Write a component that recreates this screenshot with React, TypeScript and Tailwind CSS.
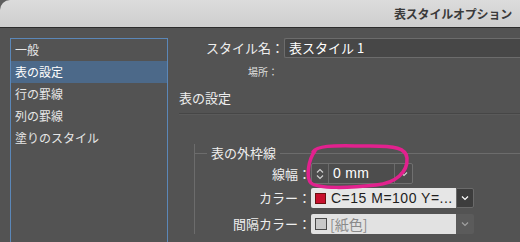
const font = { fontFamily: '"Noto Sans CJK JP", "Noto Sans", sans-serif' }

const items = ["一般", "表の設定", "行の罫線", "列の罫線", "塗りのスタイル"]

function Chevron({ className = "" }: { className?: string }) {
  return (
    <svg width="8" height="6" viewBox="0 0 8 6" className={className}>
      <path d="M1 1.5 L4 4.5 L7 1.5" fill="none" stroke="currentColor" strokeWidth="1.2" />
    </svg>
  )
}

export default function App() {
  return (
    <div
      className="relative w-[520px] h-[242px] overflow-hidden bg-[#5e5e5e] text-[#e6e6e6]"
      style={font}
    >
      {/* title bar */}
      <div className="h-[28px] rounded-tl-[10px] bg-gradient-to-b from-[#dcdcdc] to-[#cecece] border-b border-[#2c2c2c] flex items-center justify-end pr-[8px]">
        <span className="text-[12px] font-bold text-[#3a3a3a] tracking-[-0.2px]">表スタイルオプション</span>
      </div>

      <div className="flex h-[214px] bg-[#535353] pt-[10px]">
        {/* category list */}
        <div className="ml-[10px] w-[158px] h-[220px] border border-[#5b87b8] flex flex-col">
          {items.map((it, i) => (
            <div
              key={it}
              className={`h-[22px] flex items-center pl-[4px] text-[12px] ${i === 1 ? "bg-[#4c6989] text-white" : ""}`}
            >
              {it}
            </div>
          ))}
        </div>

        {/* settings */}
        <div className="ml-[11px] flex-1 flex flex-col">
          <div className="flex h-[20px]">
            <div className="w-[105px] text-right text-[13px] leading-[20px] text-[#eeeeee]">スタイル名：</div>
            <div className="flex-1 border border-[#6c6c6c] border-r-0 bg-[#474747] rounded-l-[2px] pl-[4px] text-[13px] leading-[18px] text-white">
              表スタイル 1
            </div>
          </div>
          <div className="mt-[7px] h-[14px] w-[99px] text-right text-[10px] leading-[14px] text-[#dddddd]">場所：</div>
          <div className="mt-[10px] h-[18px] text-[13px] leading-[18px] text-[#eeeeee]">表の設定</div>
          <div className="mt-[6px] h-px bg-[#464646]" />
          <div className="h-px bg-[#5a5a5a]" />

          {/* group: 表の外枠線 */}
          <div className="mt-[29px] ml-[15px] flex items-center h-[18px]">
            <div className="w-[13px] h-[18px] border-l border-[#6c6c6c] flex items-center">
              <div className="w-full h-px bg-[#6c6c6c]" />
            </div>
            <span className="px-[4px] text-[13px] leading-[18px] text-[#eeeeee]">表の外枠線</span>
            <div className="flex-1 h-px bg-[#6c6c6c]" />
          </div>
          <div className="ml-[15px] -mt-[9px] pt-[10px] border-l border-[#6c6c6c] pl-[12px] flex flex-col">
            <div className="flex h-[21px] items-center">
              <div className="w-[104px] text-right text-[13px] text-[#eeeeee]">線幅：</div>
              <div className="w-[102px] h-[21px] flex border border-[#707070] bg-[#4d4d4d] rounded-[2px]">
                <div className="w-[17px] flex flex-col items-center justify-center border-r border-[#6a6a6a] text-[#cfcfcf]">
                  <Chevron className="rotate-180" />
                  <Chevron />
                </div>
                <div className="flex-1 pl-[4px] text-[14px] leading-[19px] text-white tracking-[0.3px]" style={{ fontFamily: '"Liberation Sans", sans-serif' }}>
                  0 mm
                </div>
                <div className="w-[18px] flex items-center justify-center border-l border-[#6a6a6a] text-[#cfcfcf]">
                  <Chevron />
                </div>
              </div>
            </div>

            <div className="mt-[4px] flex h-[20px] items-center">
              <div className="w-[104px] text-right text-[13px] text-[#eeeeee]">カラー：</div>
              <div className="w-[145px] h-[20px] flex items-center bg-[#e6e6e6] rounded-l-[2px] pl-[4px]">
                <div className="w-[11px] h-[11px] bg-[#c8102e] border border-[#6a1010]" />
                <span className="ml-[5px] text-[14px] text-[#1e1e1e] tracking-[0.5px]" style={{ fontFamily: '"Liberation Sans", sans-serif' }}>
                  C=15 M=100 Y=...
                </span>
              </div>
              <div className="w-[18px] h-[20px] flex items-center justify-center bg-[#3d3d3d] border border-[#6a6a6a] rounded-r-[2px] text-white">
                <Chevron />
              </div>
            </div>

            <div className="mt-[6px] flex h-[20px] items-center">
              <div className="w-[104px] text-right text-[13px] text-[#eeeeee]">間隔カラー：</div>
              <div className="w-[145px] h-[20px] flex items-center bg-[#e2e2e2] rounded-l-[2px] pl-[4px]">
                <div className="w-[12px] h-[12px] bg-[#c9c9c9] border border-[#4a4a4a]" />
                <span className="ml-[3px] text-[14px] text-[#8a8a8a]">[紙色]</span>
              </div>
              <div className="w-[18px] h-[20px] flex items-center justify-center bg-[#5b5b5b] rounded-r-[2px] text-[#a0a0a0]">
                <Chevron />
              </div>
            </div>
          </div>
        </div>
      </div>

      {/* hand-drawn annotation */}
      <svg className="absolute left-0 top-0 pointer-events-none" width="520" height="242">
        <path
          d="M313 152 C318 144, 340 146, 370 146 C395 146, 406 148, 407 158 C408 172, 396 183, 376 185 C350 188, 318 189, 311 183 C306 178, 308 160, 315 151"
          fill="none"
          stroke="#e2218e"
          strokeWidth="3.5"
          strokeLinecap="round"
        />
      </svg>
    </div>
  )
}
